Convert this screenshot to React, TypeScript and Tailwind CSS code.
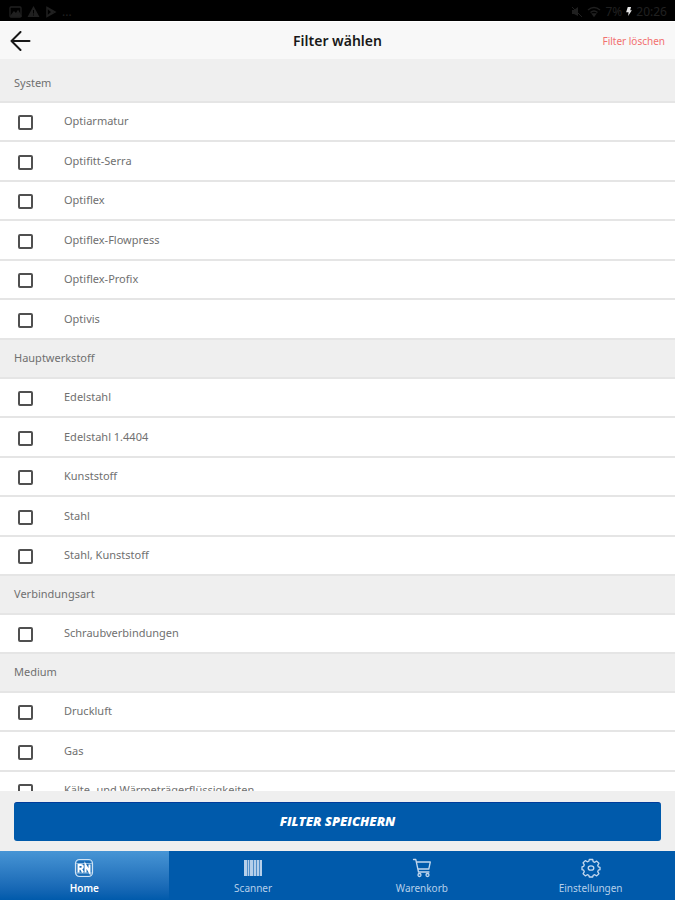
import React, { useState } from 'react'

interface FilterGroup {
  title: string
  options: string[]
}

const groups: FilterGroup[] = [
  {
    title: 'System',
    options: ['Optiarmatur', 'Optifitt-Serra', 'Optiflex', 'Optiflex-Flowpress', 'Optiflex-Profix', 'Optivis']
  },
  {
    title: 'Hauptwerkstoff',
    options: ['Edelstahl', 'Edelstahl 1.4404', 'Kunststoff', 'Stahl', 'Stahl, Kunststoff']
  },
  {
    title: 'Verbindungsart',
    options: ['Schraubverbindungen']
  },
  {
    title: 'Medium',
    options: ['Druckluft', 'Gas', 'Kälte- und Wärmeträgerflüssigkeiten']
  }
]

function HomeIcon() {
  return (
    <svg width="20" height="20" viewBox="0 0 20 20" fill="none">
      <rect x="1.500" y="1.500" width="17" height="17" rx="4" stroke="#cfe2f3" strokeWidth="1.200" />
      <rect x="3" y="3" width="14" height="14" rx="2" fill="#1a6cb5" />
      <path d="M2 5.500h16M2 15h16" stroke="#8fbce2" />
      <path d="M4.500 14.500V7h2.300q2 0 2 1.800T6.800 10.700H5M7 10.700L9 14.500M11.500 14.500V7l4 7V6.500" stroke="#ffffff" strokeWidth="2" />
    </svg>
  )
}

function ScannerIcon() {
  return (
    <svg width="20" height="20" viewBox="0 0 20 20" fill="#b5cfea">
      <rect x="1" y="2" width="3" height="16" />
      <rect x="5" y="2" width="1" height="16" />
      <rect x="7" y="2" width="3" height="16" />
      <rect x="11" y="2" width="2" height="16" />
      <rect x="14" y="2" width="2" height="16" />
      <rect x="17" y="2" width="2" height="16" />
      <rect x="1" y="2" width="18" height="16" opacity="0.45" />
    </svg>
  )
}

function CartIcon() {
  return (
    <svg width="20" height="20" viewBox="0 0 20 20" fill="none" stroke="#c3d8ee" strokeWidth="1.300" strokeLinecap="round" strokeLinejoin="round">
      <path d="M1.500 1.500h2.300L6.500 14H17M4.300 4h14l-1.500 7H5.800" />
      <circle cx="7.500" cy="17" r="1.500" />
      <circle cx="15.500" cy="17" r="1.500" />
    </svg>
  )
}

function SettingsIcon() {
  return (
    <svg width="20" height="20" viewBox="0 0 20 20" fill="none" stroke="#c3d8ee" strokeWidth="1.300" strokeLinejoin="round">
      <path d="M8.300 1.500h3.400l.5 2.200 1.500.6 2-1.200 2.200 2.200-1.200 2 .6 1.500 1.700.5v2.400l-1.700.5-.6 1.500 1.200 2-2.200 2.200-2-1.200-1.500.6-.5 1.700H8.300l-.5-1.700-1.500-.6-2 1.200-2.200-2.200 1.200-2-.6-1.500L1 11.700V8.800l1.700-.5.6-1.500-1.200-2 2.200-2.200 2 1.200 1.500-.6z" />
      <ellipse cx="10" cy="10" rx="2.800" ry="2.200" />
    </svg>
  )
}

const tabs = [
  { label: 'Home', icon: HomeIcon },
  { label: 'Scanner', icon: ScannerIcon },
  { label: 'Warenkorb', icon: CartIcon },
  { label: 'Einstellungen', icon: SettingsIcon }
]

function StatusBar() {
  return (
    <div className="flex h-[21px] shrink-0 items-center justify-between bg-black px-2 pt-[2px] text-xs text-[#202020]">
      <div className="flex items-center gap-[5px]">
        <svg width="14" height="14" viewBox="0 0 14 14" fill="none" stroke="currentColor" strokeWidth="1.300">
          <rect x="2" y="2" width="11" height="10" rx="1" />
          <path d="M3 11l3-4 2 2 2-3 3 5z" fill="currentColor" />
        </svg>
        <svg width="13" height="13" viewBox="0 0 13 13" fill="currentColor">
          <path d="M6.500 1L12.500 12H.5zM6 5v3.500h1V5zM6 9.500v1h1v-1z" fillRule="evenodd" />
        </svg>
        <svg width="12" height="12" viewBox="0 0 12 12" fill="none" stroke="currentColor" strokeWidth="1.500">
          <path d="M2 1.500L10 6l-8 4.500zM2 1.500L7 6l-5 4.500" />
        </svg>
        <span>...</span>
      </div>
      <div className="flex items-center gap-1">
        <svg width="12" height="12" viewBox="0 0 12 12" fill="currentColor">
          <path d="M1 4h2l4-3v9L3 8H1z" />
          <path d="M1 1l10 10" stroke="currentColor" />
        </svg>
        <svg width="14" height="12" viewBox="0 0 14 12" fill="none" stroke="currentColor" strokeWidth="1.400">
          <path d="M1 4q6-5 12 0M3.500 6.500q3.500-3 7 0" />
          <path d="M5.500 8h3L7 10z" fill="currentColor" />
        </svg>
        <span>7%</span>
        <svg width="6" height="9" viewBox="0 0 7 11">
          <path d="M2 0h4L5 4h2L2.500 11 3 6.500H0z" fill="#e5e5e5" />
        </svg>
        <span>20:26</span>
      </div>
    </div>
  )
}

export default function App() {
  const [selected, setSelected] = useState<string[]>([])
  const [activeTab, setActiveTab] = useState('Home')

  const toggle = (option: string) => {
    setSelected((prev) => (prev.includes(option) ? prev.filter((o) => o !== option) : [...prev, option]))
  }

  return (
    <div className="flex h-screen flex-col bg-white font-['Noto_Sans','Open_Sans',sans-serif] text-[11px] text-[#707070]">
      <StatusBar />

      <header className="grid h-[38px] shrink-0 grid-cols-[1fr_auto_1fr] items-center border-t border-white bg-[#f8f8f8] px-[10px]">
        <button type="button" aria-label="Zurück" className="justify-self-start">
          <svg width="21" height="20" viewBox="0 0 21 20" fill="none" stroke="#181818" strokeWidth="2" strokeLinecap="round" strokeLinejoin="round">
            <path d="M19.500 10H1.500M10.500 1L1.500 10l9 9" />
          </svg>
        </button>
        <h1 className="text-[14px] font-semibold text-[#181818]">Filter wählen</h1>
        <button type="button" onClick={() => setSelected([])} className="justify-self-end pt-[2px] text-[10px] text-[#f2706f]">
          Filter löschen
        </button>
      </header>

      <main className="min-h-0 flex-1 overflow-y-auto [scrollbar-width:none]">
        {groups.map((group) => (
          <section key={group.title} className="group">
            <h2 className="flex h-[39px] items-center border-b-2 border-[#e5e5e5] bg-[#efefef] px-[14px] group-first:h-[44px] group-first:pt-[6px]">
              {group.title}
            </h2>
            <ul>
              {group.options.map((option) => (
                <li key={option} className="odd:h-[39px] even:h-10 border-b-2 border-[#e5e5e5]">
                  <label className="flex h-full items-center gap-[31px] pl-[18px]">
                    <input
                      type="checkbox"
                      checked={selected.includes(option)}
                      onChange={() => toggle(option)}
                      className="mt-[2px] size-[15px] appearance-none rounded-[2px] border-2 border-[#505050] checked:bg-[#005aab]"
                    />
                    <span>{option}</span>
                  </label>
                </li>
              ))}
            </ul>
          </section>
        ))}
      </main>

      <div className="shrink-0 bg-[#efefef] px-[14px] pt-[11px] pb-[10px]">
        <button type="button" className="h-[39px] w-full rounded-[3px] border-t border-[#003c9b] bg-[#005aab] font-['Open_Sans','Noto_Sans',sans-serif] text-[13px] font-extrabold text-white italic">
          FILTER SPEICHERN
        </button>
      </div>

      <nav className="grid h-[49px] shrink-0 grid-cols-4 bg-[#005aab] text-[10px]">
        {tabs.map(({ label, icon: Icon }) => (
          <button
            key={label}
            type="button"
            onClick={() => setActiveTab(label)}
            className={`flex flex-col items-center justify-center gap-[2px] pt-[2px] leading-4 ${
              activeTab === label ? 'bg-linear-to-b from-[#4795d5] to-[#005aab] font-semibold text-white' : 'text-[#b5cfea]'
            }`}
          >
            <Icon />
            {label}
          </button>
        ))}
      </nav>
    </div>
  )
}
